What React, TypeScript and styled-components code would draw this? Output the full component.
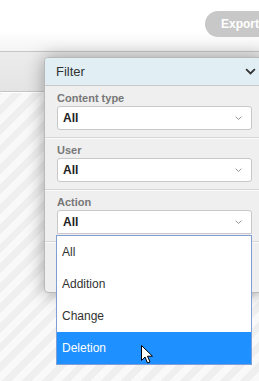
import React from "react";
import styled, { createGlobalStyle } from "styled-components";

const Global = createGlobalStyle`
  html, body { margin: 0; padding: 0; }
  body { font-family: "Liberation Sans", Arial, sans-serif; width: 259px; height: 381px; overflow: hidden; }
`;

const Page = styled.div`
  position: relative;
  width: 259px;
  height: 381px;
  overflow: hidden;
  display: flex;
  flex-direction: column;
  background: #fff;
`;

const TopBar = styled.div`
  height: 51px;
  display: flex;
  align-items: flex-start;
  padding: 11px 0 0 205px;
  box-sizing: border-box;
  background: linear-gradient(#fff 60%, #f4f4f4);
`;

const ExportButton = styled.div`
  flex: none;
  width: 70px;
  height: 26px;
  border-radius: 13px;
  background: #c8c8c8;
  color: #fff;
  font-weight: bold;
  font-size: 12px;
  line-height: 26px;
  padding-left: 16px;
  box-sizing: border-box;
`;

const Toolbar = styled.div`
  height: 39px;
  border-top: 1px solid #c6c6c6;
  border-bottom: 1px solid #c6c6c6;
  box-shadow: 0 1px 0 #fff;
  background: linear-gradient(#ececec, #e4e4e4);
`;

const Content = styled.div`
  flex: 1;
  margin-top: 1px;
  background: repeating-linear-gradient(
    -45deg,
    #f9f9f9 0px,
    #f9f9f9 7px,
    #efefef 7px,
    #efefef 14px
  );
`;

const Panel = styled.div`
  position: absolute;
  left: 44px;
  top: 57px;
  width: 221px;
  height: 236px;
  box-sizing: border-box;
  border: 1px solid #b9b9b9;
  border-radius: 4px;
  background: #efefef;
  box-shadow: 0 0 18px rgba(0, 0, 0, 0.35);
  display: flex;
  flex-direction: column;
`;

const PanelHeader = styled.div`
  height: 28px;
  flex: none;
  box-sizing: border-box;
  background: #e1eff5;
  border-bottom: 1px solid #c9c9c9;
  border-radius: 3px 3px 0 0;
  display: flex;
  align-items: center;
  justify-content: space-between;
  padding: 0 8px 0 11px;
  font-size: 13px;
  color: #333;
`;

const Section = styled.div`
  padding: 4px 12px 7px;
  border-bottom: 1px solid #d6d6d6;
  box-shadow: 0 1px 0 #fafafa;
  display: flex;
  flex-direction: column;
`;

const Label = styled.div`
  font-size: 11px;
  font-weight: bold;
  color: #777;
  line-height: 16px;
`;

const Select = styled.div<{ $open?: boolean }>`
  height: 24px;
  box-sizing: border-box;
  background: #fff;
  border: 1px solid #c8c8c8;
  border-radius: ${(p) => (p.$open ? "3px 3px 0 0" : "3px")};
  display: flex;
  align-items: center;
  justify-content: space-between;
  padding: 0 9px 0 5px;
  font-size: 12px;
  font-weight: bold;
  color: #222;
`;

const List = styled.div`
  position: absolute;
  left: 56px;
  top: 235px;
  width: 196px;
  box-sizing: border-box;
  border: 1px solid #7f9ed6;
  background: #fff;
  display: flex;
  flex-direction: column;
`;

const Option = styled.div<{ $active?: boolean }>`
  height: 32px;
  display: flex;
  align-items: center;
  padding-left: 5px;
  font-size: 12px;
  color: ${(p) => (p.$active ? "#fff" : "#333")};
  background: ${(p) => (p.$active ? "#1e90ff" : "transparent")};
`;

const Cursor = styled.svg`
  position: absolute;
  left: 141px;
  top: 345px;
`;

const Chevron = ({ size, color, sw }: { size: number; color: string; sw: number }) => (
  <svg width={size} height={size * 0.6} viewBox="0 0 10 6">
    <path d="M1 1 L5 5 L9 1" fill="none" stroke={color} strokeWidth={sw} />
  </svg>
);

export default function App() {
  return (
    <Page>
      <Global />
      <TopBar>
        <ExportButton>Export</ExportButton>
      </TopBar>
      <Toolbar />
      <Content />
      <Panel>
        <PanelHeader>
          <span>Filter</span>
          <Chevron size={11} color="#333" sw={1.6} />
        </PanelHeader>
        <Section>
          <Label>Content type</Label>
          <Select>
            <span>All</span>
            <Chevron size={7} color="#888" sw={1.3} />
          </Select>
        </Section>
        <Section>
          <Label>User</Label>
          <Select>
            <span>All</span>
            <Chevron size={7} color="#888" sw={1.3} />
          </Select>
        </Section>
        <Section>
          <Label>Action</Label>
          <Select $open>
            <span>All</span>
            <Chevron size={7} color="#888" sw={1.3} />
          </Select>
        </Section>
      </Panel>
      <List>
        <Option>All</Option>
        <Option>Addition</Option>
        <Option>Change</Option>
        <Option $active>Deletion</Option>
      </List>
      <Cursor width="13" height="20" viewBox="0 0 13 20">
        <path
          d="M0.5 0.5 L0.5 15.5 L4 12 L6.5 18 L9 17 L6.5 11.2 L11.5 11.2 Z"
          fill="#fff"
          stroke="#000"
          strokeWidth="1"
        />
      </Cursor>
    </Page>
  );
}
